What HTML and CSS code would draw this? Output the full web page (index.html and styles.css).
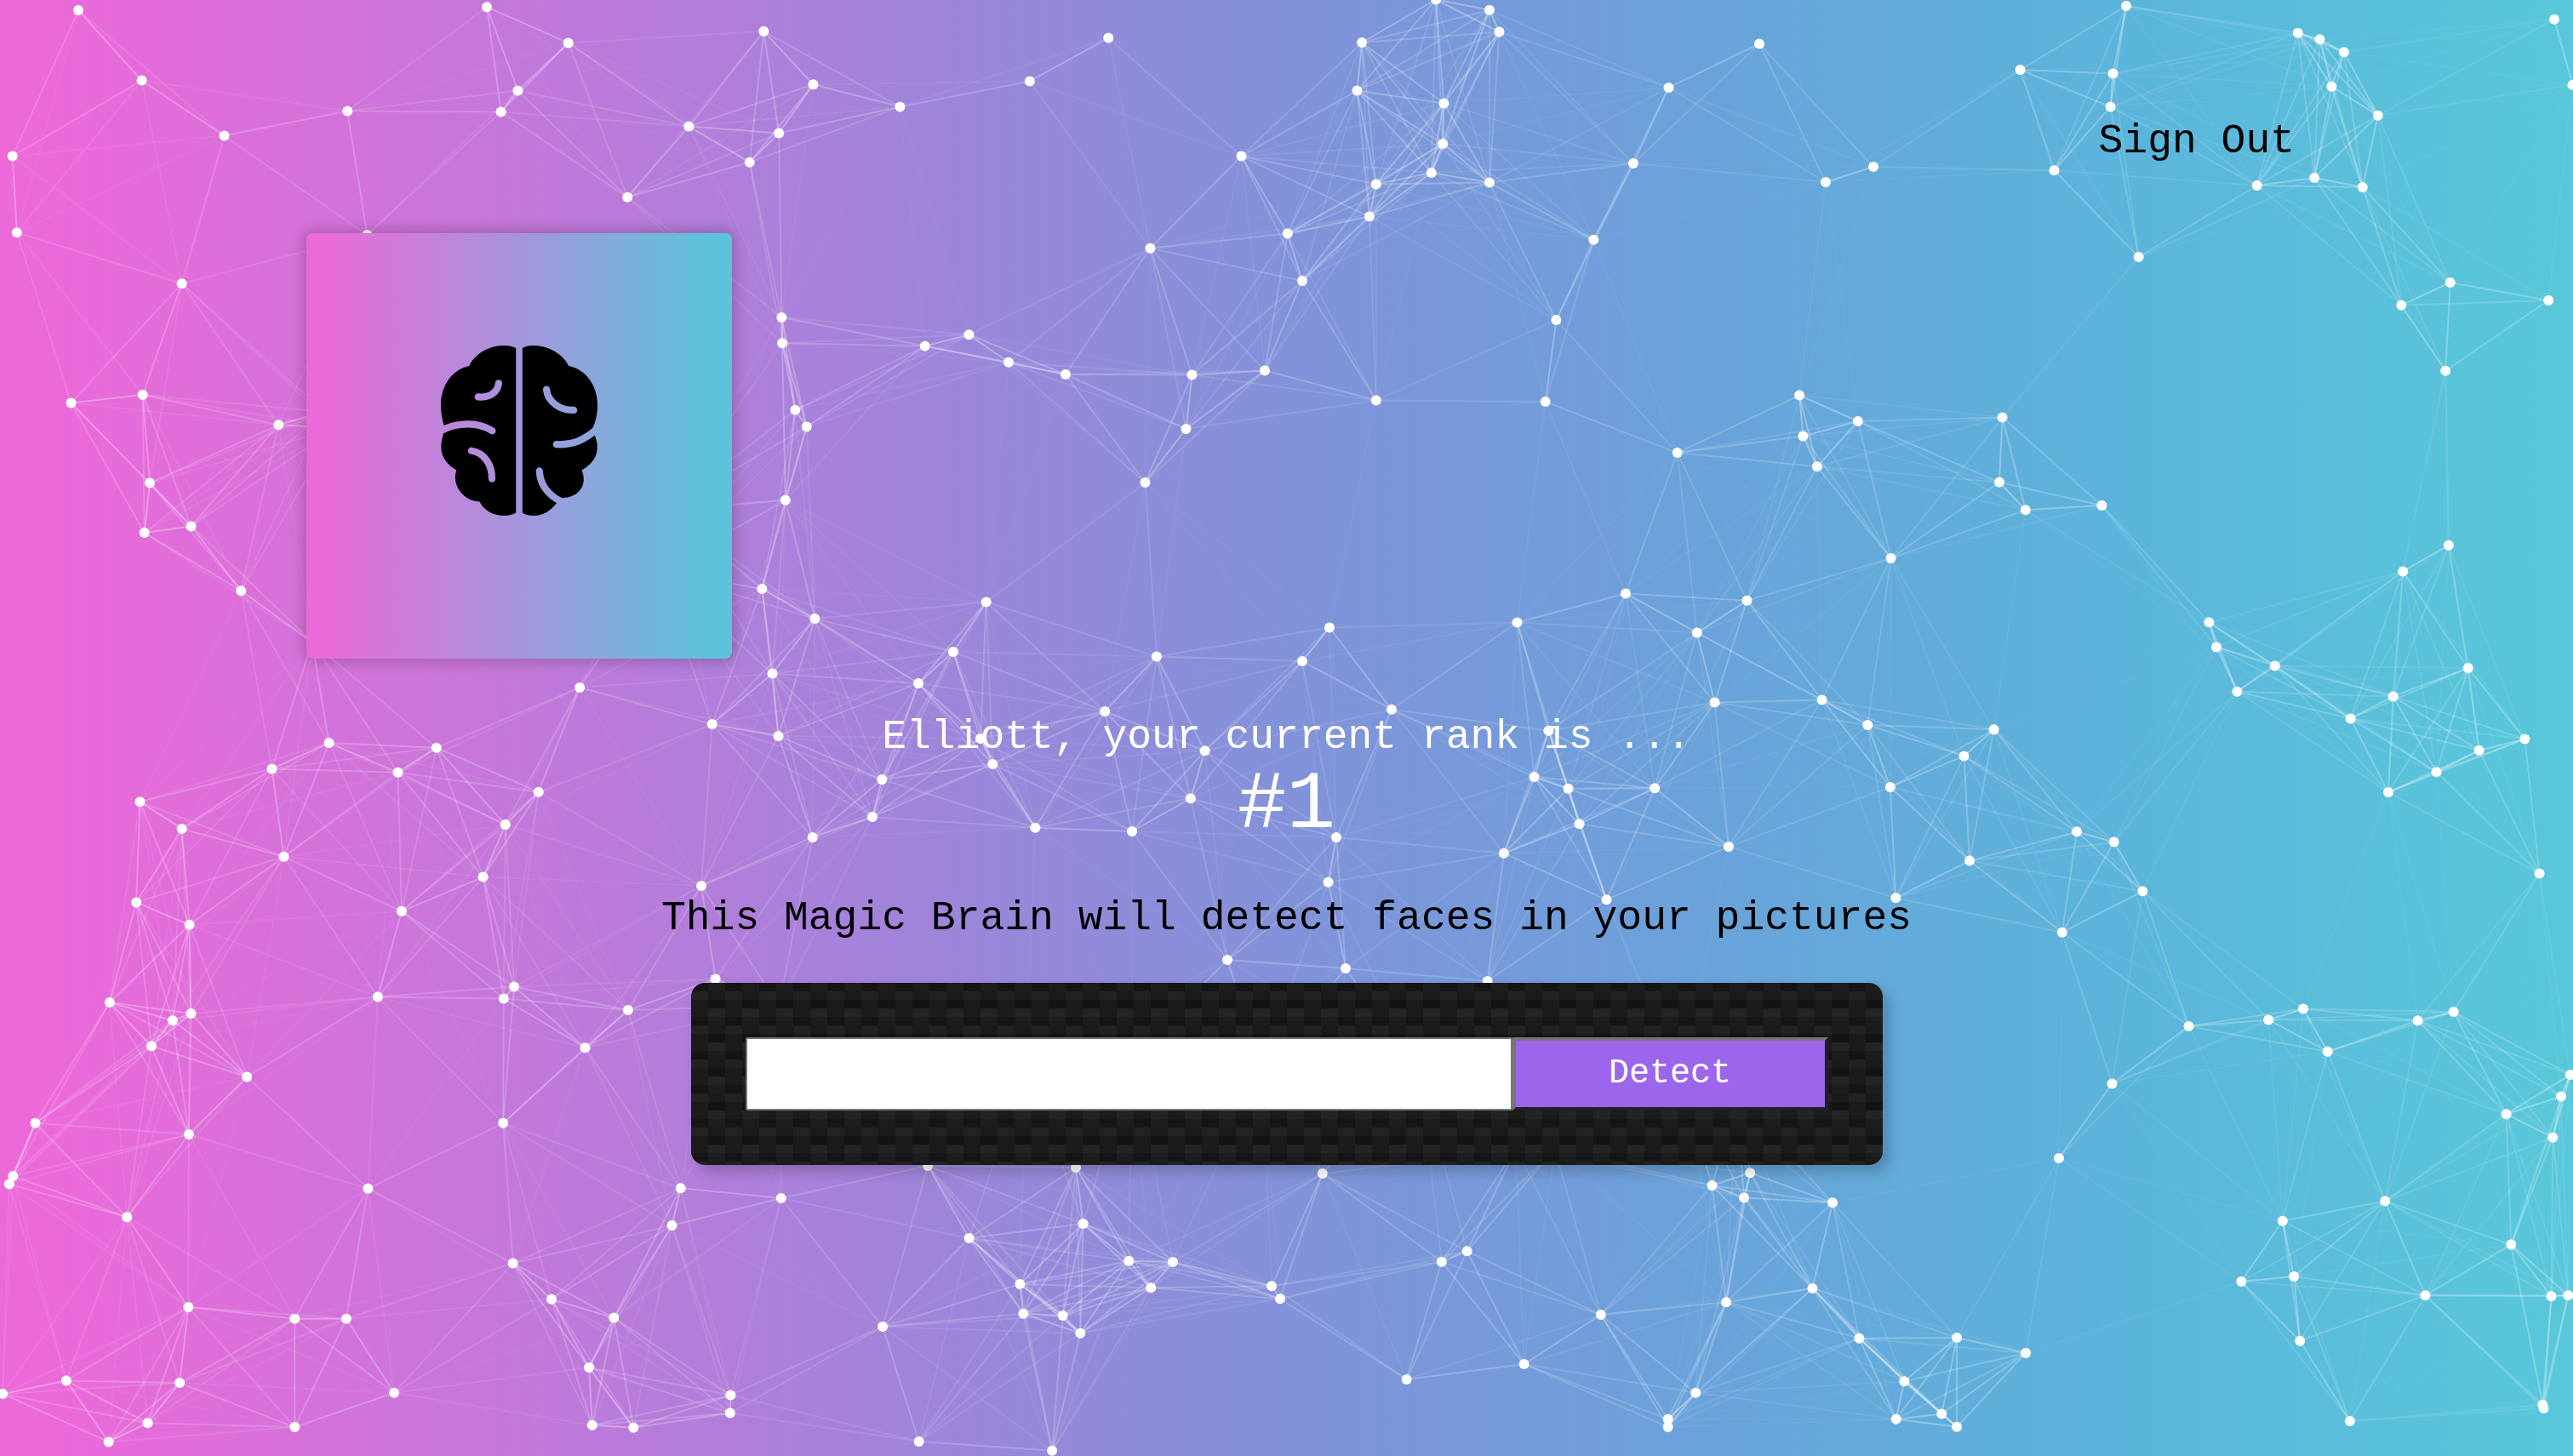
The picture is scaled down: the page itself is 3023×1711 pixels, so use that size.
FILE: index.html
```html
<!DOCTYPE html>
<html lang="en">
<head>
<meta charset="utf-8">
<title>Magic Brain</title>
<link rel="stylesheet" href="styles.css">
</head>
<body>
<canvas class="particles" id="particles" width="3023" height="1711"></canvas>
<div class="app">
  <nav class="nav"><p class="nav-link">Sign Out</p></nav>
  <div class="logo">
    <svg class="brain" viewBox="517 452 534 582" preserveAspectRatio="none" aria-label="brain">
      <defs>
        <mask id="folds" maskUnits="userSpaceOnUse" x="500" y="440" width="570" height="610">
          <rect x="500" y="440" width="570" height="610" fill="#fff"/>
          <g fill="none" stroke="#000" stroke-width="24" stroke-linecap="round">
            <path d="M714 581C712 610 685 631 644 628"/>
            <path d="M522 741C578 714 645 714 692 744"/>
            <path d="M621 812C665 818 692 860 691 908"/>
            <path d="M877 602C880 645 925 675 970 673"/>
            <path d="M911 790C960 793 1000 780 1047 739"/>
            <path d="M853 881C855 925 880 962 928 986"/>
          </g>
        </mask>
      </defs>
      <g mask="url(#folds)">
        <path d="M773 461Q755 452 732 452C675 452 628 487 614 522C555 534 517 590 517 655C517 690 524 715 532 738C522 760 518 780 518 800C518 835 540 862 570 878C552 930 595 985 649 986C662 1015 695 1034 733 1034Q758 1034 773 1024Z"/>
        <path d="M795 461Q810 452 832 452C888 452 935 485 953 522C1012 534 1051 590 1051 655C1051 690 1043 718 1034 735L1041 758C1060 800 1052 850 997 878C1018 925 990 972 934 973L912 990C890 1018 865 1034 832 1034Q808 1034 795 1024Z"/>
      </g>
    </svg>
  </div>
  <p class="rank-label">Elliott, your current rank is ...</p>
  <p class="rank">#1</p>
  <p class="tagline">This Magic Brain will detect faces in your pictures</p>
  <div class="form">
    <input class="form-input" type="text" aria-label="Image link">
    <button class="form-button">Detect</button>
  </div>
</div>
<script src="particles.js"></script>
</body>
</html>
```
FILE: styles.css
```css
* { box-sizing: border-box; }

html { min-height: 100%; }

body {
  margin: 0;
  min-height: 1711px;
  overflow: hidden;
  font-family: "Liberation Mono", "Courier New", monospace;
  font-size: 48px;
  background: linear-gradient(90deg, #ec69da 0%, #ec69da 2%, #a582da 33%, #8292d9 50%, #6aa2da 66%, #5bb4db 82%, #59c5da 97%, #59c7da 100%);
}

p { margin: 0; }

.particles {
  position: absolute;
  top: 0;
  left: 0;
  z-index: -1;
}

.app {
  display: flex;
  flex-direction: column;
  align-items: center;
}

.nav {
  align-self: stretch;
  display: flex;
  justify-content: flex-end;
  height: 274px;
  padding: 130px 327px 0 0;
}

.nav-link { line-height: 72px; }

.logo {
  align-self: flex-start;
  width: 500px;
  height: 500px;
  margin-left: 360px;
  padding-top: 132px;
  border-radius: 8px;
  text-align: center;
  background: linear-gradient(90deg, #ec69da 0%, #ec69da 3%, #a496db 50%, #92a2dc 62%, #5bc4da 96%, #5bc4da 100%);
  box-shadow: 0 0 16px 4px rgba(0, 0, 0, .2);
}

.brain {
  display: block;
  width: 184px;
  height: 200px;
  margin: 0 auto;
}

.rank-label {
  margin-top: 62px;
  line-height: 60px;
  color: #fff;
}

.rank {
  margin-top: 3px;
  font-size: 96px;
  line-height: 96px;
  color: #fff;
}

.tagline {
  margin-top: 54px;
  line-height: 60px;
}

.form {
  display: flex;
  width: 1400px;
  height: 214px;
  margin-top: 46px;
  padding: 64px;
  border-radius: 16px;
  background:
    linear-gradient(27deg, #151515 10px, transparent 10px) 0 10px,
    linear-gradient(207deg, #151515 10px, transparent 10px) 20px 0,
    linear-gradient(27deg, #222 10px, transparent 10px) 0 20px,
    linear-gradient(207deg, #222 10px, transparent 10px) 20px 10px,
    linear-gradient(90deg, #1b1b1b 20px, transparent 20px),
    linear-gradient(#1d1d1d 25%, #1a1a1a 25%, #1a1a1a 50%, transparent 50%, transparent 75%, #242424 75%, #242424);
  background-color: #131313;
  background-size: 40px 40px;
  box-shadow: 8px 8px 16px 0 rgba(0, 0, 0, .2);
}

.form-input {
  width: 901px;
  padding: 0;
  border: 2px solid #767676;
  border-radius: 2px;
  background: #fff;
}

.form-button {
  flex: 1;
  padding: 0;
  border: 4px solid;
  border-color: #767676 #212121 #212121 #767676;
  font: 40px/60px "Liberation Mono", "Courier New", monospace;
  color: #fff;
  background: #9b66eb;
}
```
FILE: particles.js
```js
const LINK_DISTANCE = 300;
const LINK_OPACITY = 0.4;
const RADIUS = 6;

const points = [
  [92,12],[166.5,94.6],[263.5,159.6],[14.7,183.6],[19.8,273.2],[408.2,130.4],[572,8.2],[667.7,50.4],
  [608.4,106.4],[588.6,131.4],[897.3,36.8],[955.4,99.3],[809.3,148.6],[915.2,156.4],[880.7,190.7],
  [737.2,231.8],[431.3,276],[213.6,333.2],[918.4,372.9],[919,403.2],[83.5,473.6],[167.7,463.9],
  [327.2,499.3],[934.3,481.8],[947.7,501.4],
  [1302.3,44.6],[1209.8,95.4],[1057.4,125.4],[1458.5,183.6],[1351.4,291.8],[1512.8,274.6],[1530,330],
  [1609,254.6],[1616.7,216.4],[1681.8,202.9],[1750,214.6],[1695.2,168.9],[1696.4,121.4],[1594.4,106.4],
  [1600.1,50],[1687,-.5],[1750,11.8],[1761.5,37.5],[1960.5,102.9],[1919,192.1],[1872.4,281.8],
  [1828.4,376.1],[1815.7,472.1],[1970.7,532.1],[1616.7,470.4],[1486,435.4],[1400.5,440.4],
  [1393.5,503.9],[1251.9,440],[1185,425.7],[1138.4,393.2],[1086.7,406.8],[1345.5,567],
  [2498,7],[2373.6,82],[2482.6,86.4],[2479.6,125.6],[2413.5,200.3],[2512.7,302],[2699.8,38.7],
  [2725.5,46.3],[2753.9,61.3],[2739.3,101.7],[2793.8,135.7],[2651.7,218],[2719.1,209],[2775.8,220],
  [3001,22.7],[3022.5,99.7],[2878.8,332],[2821.3,358.7],[2994.2,353],[2873.2,435.7],
  [2067,51.5],[2145,214],[2201,196],
  [2114.1,464.6],[2182.9,495],[2118.4,512.6],[2134.9,548.3],[2352.6,490.6],[2349,566.7],[2379.8,599.3],
  [2469.4,594],[2221.6,656.1],[1910,697.4],[2052.5,705.8],[1993.8,743.6],[2014.6,825.5],[2140.6,822.4],
  [2194.3,851.9],[2342.6,857.2],[2307.5,888.4],[2220.9,924.9],[1944.2,926.3],[2031,994.9],
  [2314,1011.6],[2227.3,1055.2],[2440,977.3],[2483.7,989.6],[2517.4,1047.3],[2422.8,1095.7],
  [2595.4,731.3],[2604,760.4],[2628.4,812.7],[2672.8,782.4],[2823.2,671.5],[2876.9,640.7],[2899.8,785],
  [2811.7,818.4],[2761.6,844.4],[2966.4,868.6],[2912.7,881.8],[2862.6,907.3],[2806,931.1],[2983.6,1026.6],
  [176,567.6],[169.6,626.1],[224.5,618.4],[283.2,694.2],[922.8,587.8],[895.4,691.9],[957.3,727.1],
  [907.5,791.4],[681.1,807.9],[836.7,851.1],[914.5,864.9],[386.5,872.9],[512.8,878.7],[319.5,903.5],
  [467.5,907.7],[632.7,930.7],[164.5,942.2],[213.6,973.9],[593.8,969],[333.5,1006.8],[567.6,1030.6],
  [160.1,1060.4],[222.6,1086.8],[471.9,1070.8],[824,1040.9],[954.7,983.9],
  [366.7,754.3],[784,599],[774,671],[381,484],[395,503],
  [128.8,1178],[224.5,1190.9],[202.8,1199.2],[177.9,1229.3],[290.2,1265.5],[443.9,1171.6],[604,1159.6],
  [591.8,1173.5],[737.9,1187.1],[687.5,1231.2],[840.6,1150.5],[41.5,1319.8],[221.9,1333],[591.2,1319.8],
  [15.3,1382],[10.8,1391.4],[149.2,1430.2],[432.4,1396.7],[799.7,1396.3],[789.5,1440],[917.7,1408],
  [602.7,1484.5],[648,1526.7],[721.3,1548.6],[221.3,1536.1],[346.3,1549.7],[406.9,1549.7],[692,1607],
  [77.8,1622.4],[211.1,1625.1],[3.2,1637.9],[463,1636.8],[858.4,1639.4],[857.8,1660.5],[173.5,1672.2],
  [346.3,1677.1],[695.8,1674.8],[744.3,1677.8],[127.6,1694.4],
  [1090,1370],[1264,1372],[1553.8,1379],[1272.6,1438],[1138.6,1455],[1326.3,1481.7],[1378,1483],
  [1198.3,1509],[1352.2,1513.3],[1202.3,1543.7],[1248.7,1546],[1269.3,1566.7],[1037.1,1559],
  [1494.1,1511.3],[1504,1526.3],[1693.8,1482.7],[1723.6,1470.3],[1652.6,1621],[1790.6,1603],
  [1880.8,1545],[2028,1530.3],[2011.5,1393],[1992.2,1636.7],[1959.7,1667.7],[1959.7,1677],
  [1079.6,1694],[1236.1,1704.7],
  [2056.2,1378.2],[2049.1,1407.6],[2153.1,1413.2],[2129.5,1513.9],[2184.4,1572.7],[2299.1,1571.9],
  [2380.1,1590],[2237.3,1623.2],[2227.7,1667.7],[2281.3,1661.6],[2299.1,1676.7],[2419,1360.9],
  [2481.5,1273.4],[2571.5,1205.9],[2665.2,1198.4],[2706,1185.6],[2734.7,1235.7],[2840.6,1199.2],
  [2882.7,1189],[2944.6,1309.2],[2999.4,1336.7],[3009,1288.5],[3019.8,1262.9],[2802.3,1411.4],
  [2681.8,1434.7],[2950.3,1462.6],[2633.3,1506],[2695.2,1499.9],[2849.5,1522.2],[2997.5,1523.3],
  [3017.3,1522.2],[2702.2,1575.7],[2760.9,1669.9],[2987.3,1650.7],[2988.6,1654.9],
  [1298.1,836],[1635,833.7],[1151.9,868],[1819.4,858.7],[1415.6,882.3],[1166.3,898],[1036.3,916],
  [1025,960],[1398.8,938.3],[1216.3,972.7],[1330,977],[1570,984],[1560.6,1036.7],[1802.5,913],
  [1842.5,926.7],[1855.6,968.3],[1766.9,1002.7],[1887.5,1057.3],
  [1158.7,707.5],[1120,766],[1079,803],[1359,771.5],[1562,737.5],[1530,777],[1782.5,731.5],
  [1442,1128],[1581,1138],[1747.7,1153],
  [1781,1350],[1827,1350],[1483,1255],[1668,1260],[915,1182],[1205,1250],[1330,1240],[2040,1290],[1975,1270]
];

const ctx = document.getElementById('particles').getContext('2d');
ctx.lineWidth = 2;
ctx.fillStyle = '#fff';

points.forEach(([x, y], i) => {
  for (const [x2, y2] of points.slice(i + 1)) {
    const opacity = LINK_OPACITY * (1 - Math.hypot(x - x2, y - y2) / LINK_DISTANCE);
    if (opacity <= 0) continue;
    ctx.strokeStyle = `rgba(255, 255, 255, ${opacity})`;
    ctx.beginPath();
    ctx.moveTo(x, y);
    ctx.lineTo(x2, y2);
    ctx.stroke();
  }
});

for (const [x, y] of points) {
  ctx.beginPath();
  ctx.arc(x, y, RADIUS, 0, Math.PI * 2);
  ctx.fill();
}
```
